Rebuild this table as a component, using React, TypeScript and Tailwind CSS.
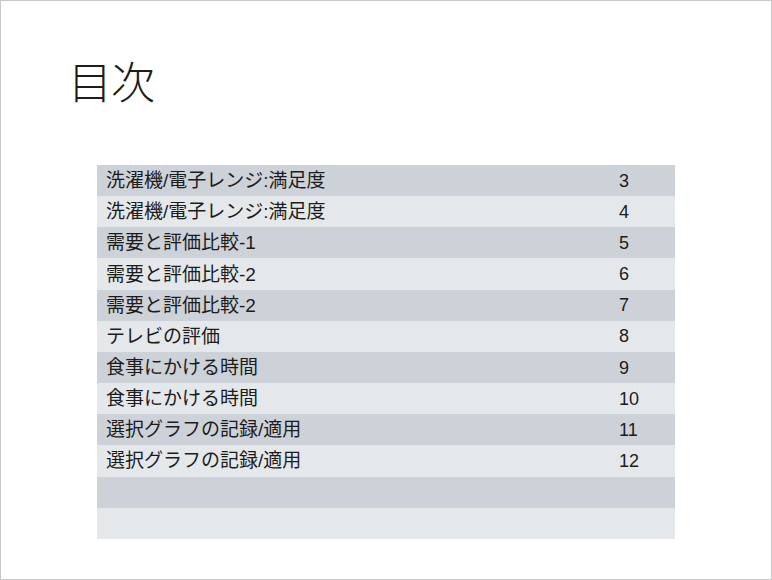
const rows: [string, string][] = [
  ["洗濯機/電子レンジ:満足度", "3"],
  ["洗濯機/電子レンジ:満足度", "4"],
  ["需要と評価比較-1", "5"],
  ["需要と評価比較-2", "6"],
  ["需要と評価比較-2", "7"],
  ["テレビの評価", "8"],
  ["食事にかける時間", "9"],
  ["食事にかける時間", "10"],
  ["選択グラフの記録/適用", "11"],
  ["選択グラフの記録/適用", "12"],
  ["", ""],
  ["", ""],
];

export default function App() {
  return (
    <div
      className="w-[772px] h-[580px] border border-[#c8c8c8] bg-white text-[#1c1c1c] flex flex-col"
      style={{ fontFamily: '"Liberation Sans", "Noto Sans CJK JP", sans-serif' }}
    >
      <h1 className="ml-[67px] mt-[61px] text-[44px] leading-none font-light -tracking-[1px]">目次</h1>
      <div className="ml-[96px] mt-[59px] w-[578px] flex flex-col">
        {rows.map(([title, page], i) => (
          <div
            key={i}
            className={`h-[31.17px] flex items-center leading-none ${
              i % 2 === 0 ? "bg-[#cdd1d8]" : "bg-[#e5e8eb]"
            }`}
          >
            <span className="pl-[9px] w-[522px] text-[19px]">{title}</span>
            <span className="text-[18px]">{page}</span>
          </div>
        ))}
      </div>
    </div>
  );
}
